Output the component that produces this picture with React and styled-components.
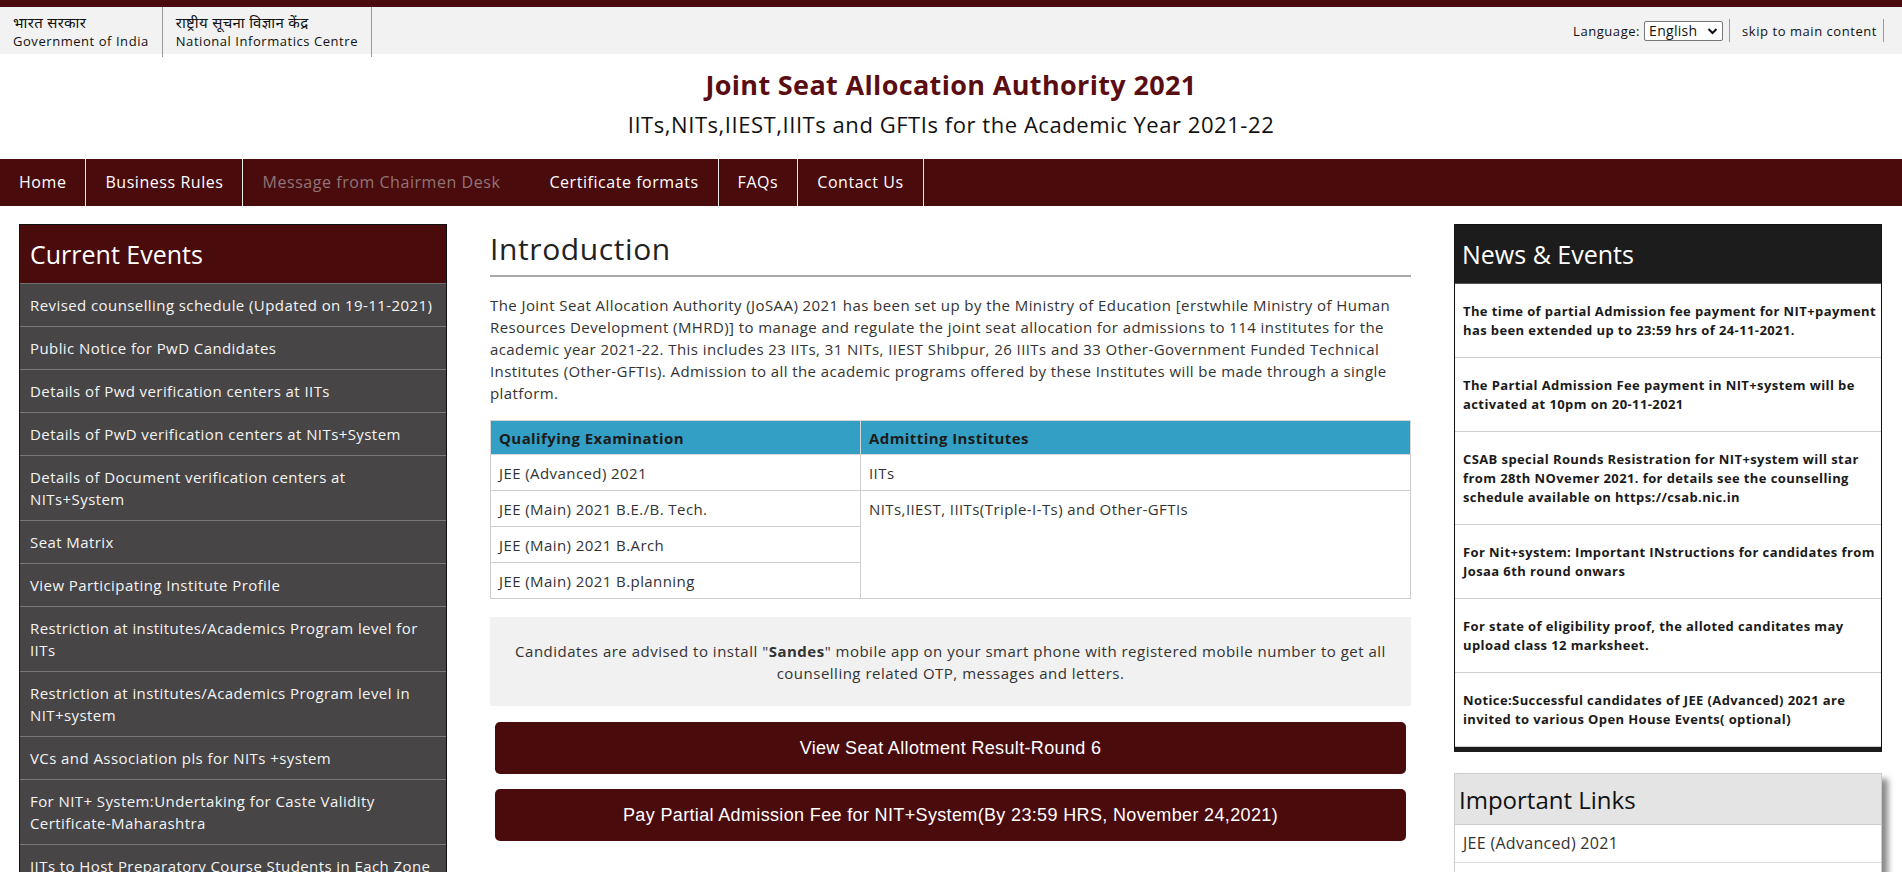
import React from "react";
import styled, { createGlobalStyle } from "styled-components";

const GlobalStyle = createGlobalStyle`
  * {
    box-sizing: border-box;
  }
  body {
    margin: 0;
    background: #ffffff;
    color: #333333;
    font-family: "Open Sans", "Noto Sans", "Noto Sans Devanagari", sans-serif;
  }
`;

const Page = styled.div`
  width: 100%;
  overflow: hidden;
`;

const TopBar = styled.div`
  display: flex;
  justify-content: space-between;
  align-items: flex-start;
  height: 54px;
  padding-right: 18px;
  background: #f2f2f2;
  border-top: 7px solid #4a0c0e;
`;

const GovList = styled.div`
  display: flex;
`;

const GovItem = styled.div`
  display: flex;
  flex-direction: column;
  justify-content: center;
  height: 50px;
  padding: 0 13px;
  border-right: 1px solid #9a9a9a;
  font-size: 13px;
  line-height: 19px;
  letter-spacing: 0.55px;
  color: #111111;
`;

const Hindi = styled.span`
  font-size: 15px;
  letter-spacing: 0.3px;
`;

const Utility = styled.div`
  display: flex;
  align-items: center;
  height: 47px;
`;

const UtilItem = styled.div`
  display: flex;
  align-items: center;
  height: 23px;
  padding: 0 6px 0 12px;
  border-right: 1px solid #9a9a9a;
  font-size: 13px;
  letter-spacing: 0.55px;
  color: #111111;
`;

const SelectWrap = styled.span`
  position: relative;
  display: inline-flex;
  margin-left: 4px;
`;

const Select = styled.select`
  appearance: none;
  width: 79px;
  height: 20px;
  padding: 0 0 0 4px;
  border: 1px solid #767676;
  border-radius: 2px;
  background: #ffffff;
  font-family: "Open Sans", sans-serif;
  font-size: 14px;
  line-height: 18px;
  letter-spacing: 0.3px;
  color: #111111;
`;

const Chevron = styled.svg`
  position: absolute;
  right: 5px;
  top: 5px;
  pointer-events: none;
`;

const Masthead = styled.header`
  padding: 13px 0 20px;
  text-align: center;
`;

const Title = styled.h1`
  margin: 0;
  font-size: 27px;
  line-height: 36px;
  font-weight: 700;
  letter-spacing: 0.35px;
  color: #5a0e12;
`;

const Subtitle = styled.h2`
  margin: 6px 0 0;
  font-size: 22px;
  line-height: 30px;
  font-weight: 400;
  letter-spacing: 0.55px;
  color: #111111;
`;

const Nav = styled.nav`
  display: flex;
  height: 47px;
  background: #4a0b0d;
`;

const NavItem = styled.a`
  display: block;
  padding: 0 ${(p) => (p.$muted ? "30px" : "19px")} 0 19px;
  border-right: ${(p) => (p.$muted ? "none" : "1px solid #ececec")};
  font-size: 16px;
  line-height: 47px;
  letter-spacing: 0.55px;
  color: ${(p) => (p.$muted ? "#917476" : "#ffffff")};
  text-decoration: none;
  white-space: nowrap;
`;

const Main = styled.main`
  display: grid;
  grid-template-columns: 428px 1fr 428px;
  column-gap: 43px;
  align-items: start;
  padding: 18px 20px 0 19px;
`;

const EventsPanel = styled.aside`
  border: 1px solid #111111;
  background: #474546;
`;

const PanelHead = styled.div`
  display: flex;
  align-items: center;
  height: ${(p) => p.$h || "59px"};
  padding: 0 ${(p) => p.$pad || "10px"};
  font-size: ${(p) => p.$size || "25px"};
  color: ${(p) => p.$color || "#ffffff"};
  background: ${(p) => p.$bg};
  border-bottom: 1px solid ${(p) => p.$line || "#6e6c6c"};
`;

const EventItem = styled.div`
  padding: 10px 10px;
  font-size: 15px;
  line-height: 22px;
  letter-spacing: 0.42px;
  color: #f4f4f4;
  border-bottom: 1px solid #7a7878;
`;

const Content = styled.section`
  min-width: 0;
`;

const Heading = styled.h1`
  margin: 7px 0 0;
  padding-bottom: 8px;
  font-size: 30px;
  line-height: 36px;
  font-weight: 400;
  letter-spacing: 0.6px;
  color: #222222;
  border-bottom: 2px solid #a9a9a9;
`;

const Para = styled.p`
  margin: 17px 0 16px;
  font-size: 15px;
  line-height: 22px;
  letter-spacing: 0.42px;
  color: #333333;
`;

const Table = styled.table`
  width: 100%;
  border-collapse: collapse;
  font-size: 15px;
  line-height: 22px;
  letter-spacing: 0.42px;
`;

const Th = styled.th`
  width: ${(p) => p.$w || "auto"};
  height: 34px;
  padding: 0 8px;
  text-align: left;
  font-weight: 700;
  color: #1b1b1b;
  background: #339fc4;
  border: 1px solid #d6d6d6;
`;

const Td = styled.td`
  height: 36px;
  padding: ${(p) => (p.$top ? "7px 8px 0" : "0 8px")};
  vertical-align: ${(p) => (p.$top ? "top" : "middle")};
  color: #333333;
  border: 1px solid #cfcfcf;
`;

const Notice = styled.div`
  margin-top: 18px;
  padding: 23px 20px 22px;
  background: #f1f1f1;
  text-align: center;
  font-size: 15px;
  line-height: 22px;
  letter-spacing: 0.5px;
  color: #333333;
`;

const ActionButton = styled.button`
  display: block;
  width: calc(100% - 10px);
  height: 52px;
  margin: ${(p) => p.$gap || "16px"} 5px 0;
  border: none;
  border-radius: 5px;
  background: #4a0b0d;
  color: #ffffff;
  font-family: "Liberation Sans", Arial, sans-serif;
  font-size: 18px;
  letter-spacing: 0.35px;
`;

const RightCol = styled.div`
  display: flex;
  flex-direction: column;
  gap: 21px;
`;

const NewsPanel = styled.aside`
  border: 1px solid #111111;
  border-bottom: 5px solid #1c1c1c;
  background: #ffffff;
`;

const NewsItem = styled.div`
  padding: 18px 2px 17px 8px;
  font-size: 13px;
  line-height: 19px;
  font-weight: 700;
  letter-spacing: 0.4px;
  color: #1a1a1a;
  border-bottom: 1px solid #cfcfcf;
`;

const LinksPanel = styled.aside`
  border: 1px solid #cccccc;
  background: #ffffff;
  box-shadow: 6px 6px 6px #8a8a8a;
`;

const LinkItem = styled.div`
  padding: 7px 8px;
  font-size: 16px;
  line-height: 23px;
  letter-spacing: 0.3px;
  color: #333333;
  border-bottom: 1px solid #dddddd;
`;

const events = [
  "Revised counselling schedule (Updated on 19-11-2021)",
  "Public Notice for PwD Candidates",
  "Details of Pwd verification centers at IITs",
  "Details of PwD verification centers at NITs+System",
  "Details of Document verification centers at NITs+System",
  "Seat Matrix",
  "View Participating Institute Profile",
  "Restriction at institutes/Academics Program level for IITs",
  "Restriction at institutes/Academics Program level in NIT+system",
  "VCs and Association pls for NITs +system",
  "For NIT+ System:Undertaking for Caste Validity Certificate-Maharashtra",
  "IITs to Host Preparatory Course Students in Each Zone",
  "Business Rules for JoSAA 2021",
];

const news = [
  "The time of partial Admission fee payment for NIT+payment has been extended up to 23:59 hrs of 24-11-2021.",
  "The Partial Admission Fee payment in NIT+system will be activated at 10pm on 20-11-2021",
  "CSAB special Rounds Resistration for NIT+system will star from 28th NOvemer 2021. for details see the counselling schedule available on https://csab.nic.in",
  "For Nit+system: Important INstructions for candidates from Josaa 6th round onwars",
  "For state of eligibility proof, the alloted canditates may upload class 12 marksheet.",
  "Notice:Successful candidates of JEE (Advanced) 2021 are invited to various Open House Events( optional)",
];

const links = ["JEE (Advanced) 2021", "JEE (Main) 2021", "CSAB 2021"];

export default function App() {
  return (
    <Page>
      <GlobalStyle />
      <TopBar>
        <GovList>
          <GovItem>
            <Hindi>भारत सरकार</Hindi>
            <span>Government of India</span>
          </GovItem>
          <GovItem>
            <Hindi>राष्ट्रीय सूचना विज्ञान केंद्र</Hindi>
            <span>National Informatics Centre</span>
          </GovItem>
        </GovList>
        <Utility>
          <UtilItem>
            Language:
            <SelectWrap>
              <Select defaultValue="en">
                <option value="en">English</option>
              </Select>
              <Chevron width="11" height="10" viewBox="0 0 11 10">
                <path d="M1.5 3 L5.5 7 L9.5 3" fill="none" stroke="#111" strokeWidth="2" />
              </Chevron>
            </SelectWrap>
          </UtilItem>
          <UtilItem>skip to main content</UtilItem>
        </Utility>
      </TopBar>

      <Masthead>
        <Title>Joint Seat Allocation Authority 2021</Title>
        <Subtitle>IITs,NITs,IIEST,IIITs and GFTIs for the Academic Year 2021-22</Subtitle>
      </Masthead>

      <Nav>
        <NavItem>Home</NavItem>
        <NavItem>Business Rules</NavItem>
        <NavItem $muted>Message from Chairmen Desk</NavItem>
        <NavItem>Certificate formats</NavItem>
        <NavItem>FAQs</NavItem>
        <NavItem>Contact Us</NavItem>
      </Nav>

      <Main>
        <EventsPanel>
          <PanelHead $bg="#4a0b0d">Current Events</PanelHead>
          {events.map((e) => (
            <EventItem key={e}>{e}</EventItem>
          ))}
        </EventsPanel>

        <Content>
          <Heading>Introduction</Heading>
          <Para>
            The Joint Seat Allocation Authority (JoSAA) 2021 has been set up by the Ministry of
            Education [erstwhile Ministry of Human Resources Development (MHRD)] to manage and
            regulate the joint seat allocation for admissions to 114 institutes for the academic
            year 2021-22. This includes 23 IITs, 31 NITs, IIEST Shibpur, 26 IIITs and 33
            Other-Government Funded Technical Institutes (Other-GFTIs). Admission to all the
            academic programs offered by these Institutes will be made through a single platform.
          </Para>
          <Table>
            <thead>
              <tr>
                <Th $w="370px">Qualifying Examination</Th>
                <Th>Admitting Institutes</Th>
              </tr>
            </thead>
            <tbody>
              <tr>
                <Td>JEE (Advanced) 2021</Td>
                <Td>IITs</Td>
              </tr>
              <tr>
                <Td>JEE (Main) 2021 B.E./B. Tech.</Td>
                <Td $top rowSpan={3}>
                  NITs,IIEST, IIITs(Triple-I-Ts) and Other-GFTIs
                </Td>
              </tr>
              <tr>
                <Td>JEE (Main) 2021 B.Arch</Td>
              </tr>
              <tr>
                <Td>JEE (Main) 2021 B.planning</Td>
              </tr>
            </tbody>
          </Table>
          <Notice>
            Candidates are advised to install "<b>Sandes</b>" mobile app on your smart phone with
            registered mobile number to get all counselling related OTP, messages and letters.
          </Notice>
          <ActionButton>View Seat Allotment Result-Round 6</ActionButton>
          <ActionButton $gap="15px">
            Pay Partial Admission Fee for NIT+System(By 23:59 HRS, November 24,2021)
          </ActionButton>
        </Content>

        <RightCol>
          <NewsPanel>
            <PanelHead $bg="#1c1c1c" $pad="7px" $line="#555555">
              News &amp; Events
            </PanelHead>
            {news.map((n) => (
              <NewsItem key={n}>{n}</NewsItem>
            ))}
          </NewsPanel>
          <LinksPanel>
            <PanelHead $bg="#e4e4e4" $color="#111111" $pad="4px" $line="#cccccc" $h="51px" $size="24px">
              Important Links
            </PanelHead>
            {links.map((l) => (
              <LinkItem key={l}>{l}</LinkItem>
            ))}
          </LinksPanel>
        </RightCol>
      </Main>
    </Page>
  );
}
